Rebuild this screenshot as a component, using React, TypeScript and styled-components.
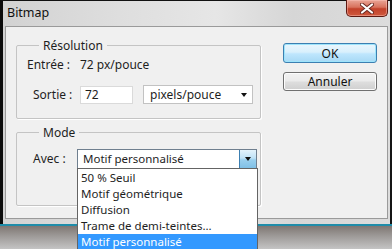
import React from 'react';
import styled, { createGlobalStyle } from 'styled-components';

const GlobalStyle = createGlobalStyle`
  html, body {
    margin: 0;
    padding: 0;
    width: 392px;
    height: 249px;
    overflow: hidden;
    background: #000;
  }
  * {
    box-sizing: border-box;
  }
`;

const FONT = `'Noto Sans', 'Open Sans', 'DejaVu Sans', sans-serif`;

const Screen = styled.div`
  width: 392px;
  height: 249px;
  display: flex;
  flex-direction: column;
  font-family: ${FONT};
  font-size: 12px;
  color: #1e1e1e;
`;

const Window = styled.div`
  height: 224px;
  display: flex;
  flex-direction: column;
  border-top: 1px solid #111;
  border-left: 3px solid #0b0b0b;
  border-right: 2px solid #151515;
  padding: 0 2px 5px 2px;
  background: linear-gradient(90deg, #d2d2d2 0%, #dedede 30%, #e6e6e6 55%, #d6d6d6 75%, #dcdcdc 100%);
`;

const TitleBar = styled.div`
  height: 25px;
  display: flex;
  justify-content: space-between;
  align-items: flex-start;
`;

const Title = styled.span`
  font-size: 12.5px;
  line-height: 14px;
  padding: 5px 0 0 2px;
  color: #111;
`;

const CloseButton = styled.div`
  width: 42px;
  height: 17px;
  margin-top: -1px;
  display: flex;
  align-items: center;
  justify-content: center;
  border: 1px solid #5e1a12;
  border-top: none;
  border-radius: 0 0 5px 5px;
  background: linear-gradient(180deg, #e9a596 0%, #d8725d 45%, #c2412a 55%, #cf5a3e 100%);
  box-shadow: inset 0 0 0 1px rgba(255, 200, 190, 0.45);
`;

const Panel = styled.div`
  flex: 1;
  display: flex;
  border: 1px solid #9a9a9a;
  background: #f0f0f0;
  padding: 11px 10px 0 10px;
`;

const LeftColumn = styled.div`
  width: 245px;
  flex-shrink: 0;
  display: flex;
  flex-direction: column;
  gap: 6px;
`;

const Group = styled.fieldset<{ $bottom: number }>`
  margin: 0;
  min-width: 0;
  width: 245px;
  padding: 0 3px ${(p) => p.$bottom}px 10px;
  border: 1px solid #c4c4c4;
  border-radius: 2px;
  box-shadow: 1px 1px 0 #fff;
`;

const Legend = styled.legend`
  margin-left: 12px;
  padding: 0 4px;
  font-size: 12px;
  line-height: 15px;
`;

const Row = styled.div<{ $top: number; $indent?: number }>`
  display: flex;
  align-items: center;
  margin-top: ${(p) => p.$top}px;
  padding-left: ${(p) => p.$indent || 0}px;
  line-height: 16px;
`;

const Label = styled.span<{ $width: number }>`
  width: ${(p) => p.$width}px;
  flex-shrink: 0;
`;

const TextBox = styled.div`
  width: 53px;
  height: 18px;
  flex-shrink: 0;
  border: 1px solid #dadada;
  background: #fff;
  padding: 0 0 0 4px;
  line-height: 16px;
`;

const Select = styled.div`
  width: 110px;
  height: 19px;
  flex-shrink: 0;
  margin-left: 10px;
  border: 1px solid #c2c2c2;
  background: #fff;
  display: flex;
  align-items: center;
  justify-content: space-between;
  padding: 0 5px 0 6px;
`;

const Arrow = styled.span`
  width: 0;
  height: 0;
  border-left: 3.5px solid transparent;
  border-right: 3.5px solid transparent;
  border-top: 4px solid #111;
`;

const Combo = styled.div`
  position: relative;
  width: 180px;
  height: 20px;
  flex-shrink: 0;
  border: 1px solid #6f7f8f;
  background: #fff;
  display: flex;
  align-items: center;
  font-size: 11.5px;
`;

const ComboText = styled.span`
  flex: 1;
  padding-left: 5px;
`;

const ComboButton = styled.div`
  width: 17px;
  height: 18px;
  display: flex;
  align-items: center;
  justify-content: center;
  border-left: 1px solid #3c7fb1;
  background: linear-gradient(180deg, #e4f3fc 0%, #bfe2f7 45%, #99cfee 55%, #80c0e6 100%);
`;

const DropList = styled.ul`
  position: absolute;
  top: 18px;
  left: -1px;
  width: 181px;
  margin: 0;
  padding: 1px 0 0 0;
  list-style: none;
  border: 1px solid #646464;
  background: #fff;
  z-index: 5;
`;

const Item = styled.li<{ $selected?: boolean }>`
  height: 16px;
  line-height: 16px;
  padding-left: 3px;
  font-size: 11.5px;
  background: ${(p) => (p.$selected ? '#3399ff' : 'transparent')};
  color: ${(p) => (p.$selected ? '#fff' : '#1e1e1e')};
`;

const RightColumn = styled.div`
  margin-left: 22px;
  padding-top: 5px;
  display: flex;
  flex-direction: column;
  gap: 9px;
`;

const Button = styled.div<{ $default?: boolean }>`
  width: 94px;
  height: ${(p) => (p.$default ? 20 : 19)}px;
  display: flex;
  align-items: center;
  justify-content: center;
  border-radius: 3px;
  border: 1px solid ${(p) => (p.$default ? '#3c7fb1' : '#707070')};
  background: ${(p) =>
    p.$default
      ? 'linear-gradient(180deg, #eaf6fd 0%, #d9f0fc 45%, #bee6fd 55%, #a7d9f5 100%)'
      : 'linear-gradient(180deg, #f2f2f2 0%, #ebebeb 45%, #dddddd 55%, #cfcfcf 100%)'};
  box-shadow: inset 0 0 0 1px ${(p) => (p.$default ? '#9ee4fb' : '#fcfcfc')};
  font-size: 12px;
  color: #111;
`;

const Desktop = styled.div`
  flex: 1;
  border-top: 2px solid #1f8ca9;
  background: linear-gradient(180deg, #7e7672 0%, #9b9795 40%, #c4c4c4 100%);
`;

const items = [
  '50 % Seuil',
  'Motif géométrique',
  'Diffusion',
  'Trame de demi-teintes...',
  'Motif personnalisé',
];

export default function App() {
  return (
    <Screen>
      <GlobalStyle />
      <Window>
        <TitleBar>
          <Title>Bitmap</Title>
          <CloseButton>
            <svg width="14" height="11" viewBox="0 0 14 11">
              <path
                d="M2 1.5 L12 9.5 M12 1.5 L2 9.5"
                stroke="#6a2a22"
                strokeWidth="4"
                strokeLinecap="round"
              />
              <path
                d="M2 1.5 L12 9.5 M12 1.5 L2 9.5"
                stroke="#fff"
                strokeWidth="2.2"
                strokeLinecap="round"
              />
            </svg>
          </CloseButton>
        </TitleBar>
        <Panel>
          <LeftColumn>
            <Group $bottom={14}>
              <Legend>Résolution</Legend>
              <Row $top={4}>
                <Label $width={53}>Entrée :</Label>
                <span>72 px/pouce</span>
              </Row>
              <Row $top={12} $indent={6}>
                <Label $width={47}>Sortie :</Label>
                <TextBox>72</TextBox>
                <Select>
                  <span>pixels/pouce</span>
                  <Arrow />
                </Select>
              </Row>
            </Group>
            <Group $bottom={36}>
              <Legend>Mode</Legend>
              <Row $top={9} $indent={6}>
                <Label $width={44}>Avec :</Label>
                <Combo>
                  <ComboText>Motif personnalisé</ComboText>
                  <ComboButton>
                    <Arrow />
                  </ComboButton>
                  <DropList>
                    {items.map((it, i) => (
                      <Item key={it} $selected={i === items.length - 1}>
                        {it}
                      </Item>
                    ))}
                  </DropList>
                </Combo>
              </Row>
            </Group>
          </LeftColumn>
          <RightColumn>
            <Button $default>OK</Button>
            <Button>Annuler</Button>
          </RightColumn>
        </Panel>
      </Window>
      <Desktop />
    </Screen>
  );
}
